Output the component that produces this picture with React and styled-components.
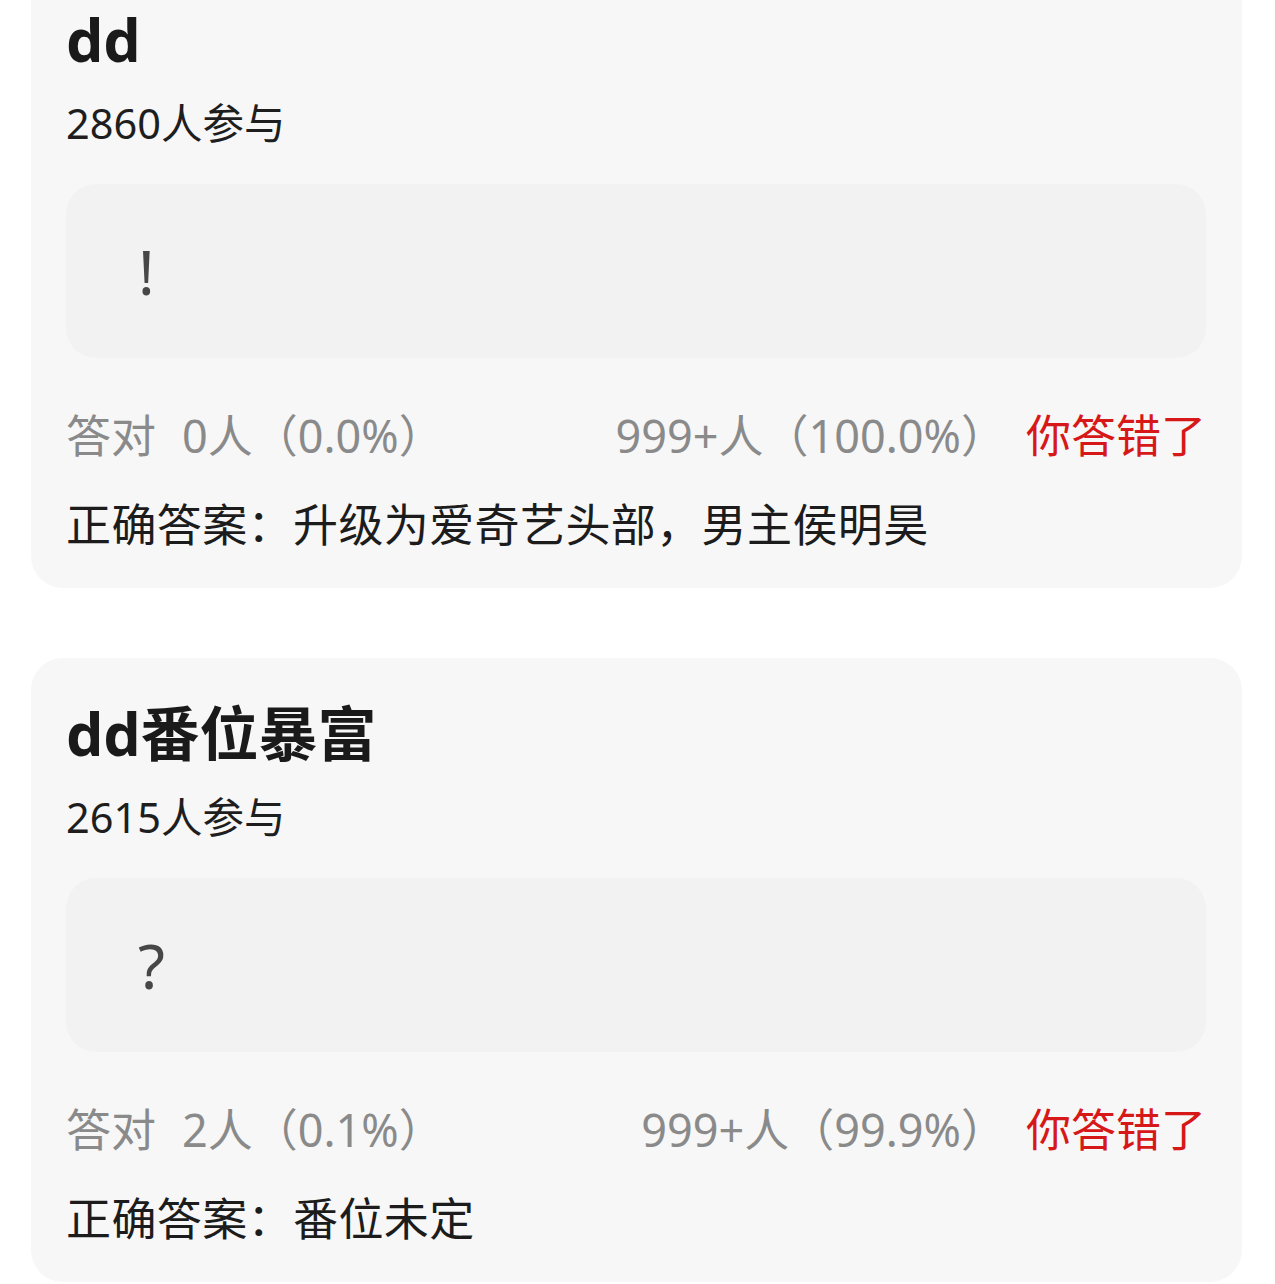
import React from "react";
import styled, { createGlobalStyle } from "styled-components";

const Global = createGlobalStyle`
  html, body {
    margin: 0;
    padding: 0;
    background: #ffffff;
  }
  body {
    font-family: "Noto Sans", "Noto Sans CJK SC", sans-serif;
    color: #1c1c1c;
    overflow: hidden;
  }
`;

const Feed = styled.div`
  display: flex;
  flex-direction: column;
  gap: 70px;
  padding: 0 33px 0 31px;
  margin-top: -36px;
`;

const Card = styled.section`
  background: #f7f7f7;
  border-radius: 32px;
  padding: 37px 36px 33px 35px;
  display: flex;
  flex-direction: column;
`;

const Title = styled.h2`
  margin: 0;
  font-size: 59px;
  line-height: 76px;
  font-weight: 700;
  color: #1a1a1a;
`;

const Participants = styled.div`
  margin-top: 20px;
  font-size: 41.5px;
  line-height: 52px;
  color: #1e1e1e;
`;

const Question = styled.div`
  margin-top: 35px;
  height: 174px;
  border-radius: 30px;
  background: #f2f2f2;
  display: flex;
  align-items: center;
  padding-left: 72px;
  font-size: 62px;
  font-weight: 400;
  color: #474747;
`;

const Stats = styled.div`
  margin-top: 48px;
  display: flex;
  align-items: center;
  font-size: 45px;
  line-height: 60px;
  color: #8a8a8a;
`;

const Label = styled.span`
  margin-right: 26px;
`;

const Spacer = styled.span`
  flex: 1;
`;

const Verdict = styled.span`
  margin-left: 20px;
  color: #d71818;
`;

const Answer = styled.div`
  margin-top: 29px;
  font-size: 45px;
  line-height: 60px;
  letter-spacing: 0.4px;
  color: #1c1c1c;
`;

const quizzes = [
  {
    title: "dd",
    joined: 2860,
    mark: "!",
    right: "0人（0.0%）",
    wrong: "999+人（100.0%）",
    answer: "升级为爱奇艺头部，男主侯明昊",
  },
  {
    title: "dd番位暴富",
    joined: 2615,
    mark: "?",
    right: "2人（0.1%）",
    wrong: "999+人（99.9%）",
    answer: "番位未定",
  },
];

export default function App() {
  return (
    <>
      <Global />
      <Feed>
        {quizzes.map((q) => (
          <Card key={q.title}>
            <Title>{q.title}</Title>
            <Participants>{q.joined}人参与</Participants>
            <Question>{q.mark}</Question>
            <Stats>
              <Label>答对</Label>
              <span>{q.right}</span>
              <Spacer />
              <span>{q.wrong}</span>
              <Verdict>你答错了</Verdict>
            </Stats>
            <Answer>正确答案：{q.answer}</Answer>
          </Card>
        ))}
      </Feed>
    </>
  );
}
